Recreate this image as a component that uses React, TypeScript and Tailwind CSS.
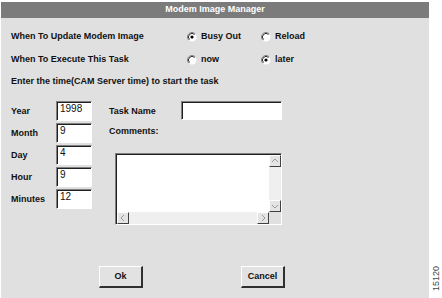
import React from "react";

const font = { fontFamily: '"Liberation Sans", Arial, sans-serif' };

function Radio({ checked }: { checked?: boolean }) {
  return (
    <svg width="10" height="10" viewBox="0 0 10 10" className="shrink-0">
      <circle cx="5" cy="5" r="4.5" fill="#ffffff" />
      <path d="M1.8 8.2 A4.5 4.5 0 0 1 8.2 1.8" stroke="#808080" strokeWidth="1" fill="none" />
      <path d="M2.5 7.5 A3.5 3.5 0 0 1 7.5 2.5" stroke="#303030" strokeWidth="1" fill="none" />
      {checked && <circle cx="5" cy="5" r="1.6" fill="#000" />}
    </svg>
  );
}

function RadioItem({ label, checked, w }: { label: string; checked?: boolean; w: string }) {
  return (
    <div className={`flex items-center gap-[4px] ${w}`}>
      <Radio checked={checked} />
      <span>{label}</span>
    </div>
  );
}

function Field({ value, cls }: { value?: string; cls: string }) {
  return (
    <div
      className={`bg-white border-t border-l border-t-[#808080] border-l-[#808080] border-b border-r border-b-white border-r-white shadow-[inset_1px_1px_0_#202020] pl-[3px] pt-[1px] font-normal text-[10px] leading-[12px] text-[#111] ${cls}`}
    >
      {value}
    </div>
  );
}

function ScrollBtn({ dir }: { dir: "up" | "down" | "left" | "right" }) {
  const pts: Record<string, string> = {
    up: "3,7 6,4 9,7",
    down: "3,5 6,8 9,5",
    left: "7,3 4,6 7,9",
    right: "5,3 8,6 5,9",
  };
  return (
    <div className="w-[12px] h-[12px] bg-[#e4e4e4] border-t border-l border-t-white border-l-white border-b border-r border-b-[#404040] border-r-[#404040] flex items-center justify-center">
      <svg width="10" height="10" viewBox="1 1 10 10">
        <polyline points={pts[dir]} fill="none" stroke="#9a9a9a" strokeWidth="1" />
      </svg>
    </div>
  );
}

function Button({ label }: { label: string }) {
  return (
    <div className="w-[44px] h-[22px] bg-[#e2e2e2] border-t border-l border-t-white border-l-white border-b-2 border-r-2 border-b-[#303030] border-r-[#303030] flex items-center justify-center text-[9px] font-bold text-[#111]">
      {label}
    </div>
  );
}

export default function App() {
  return (
    <div className="w-[442px] h-[298px] bg-white flex overflow-hidden text-[#111] font-bold text-[9px]" style={font}>
      <div className="w-[428px] ml-[1px] mt-[2px] bg-[#e0e0e0] flex flex-col">
        <div className="h-[16px] bg-[#7b7b7b] flex items-center justify-center text-white text-[9px] font-bold">
          Modem Image Manager
        </div>
        <div className="pl-[10px] flex flex-col">
          <div className="mt-[12px] h-[14px] flex items-center">
            <div className="w-[176px]">When To Update Modem Image</div>
            <RadioItem label="Busy Out" checked w="w-[74px]" />
            <RadioItem label="Reload" w="w-[60px]" />
          </div>
          <div className="mt-[9px] h-[14px] flex items-center">
            <div className="w-[176px]">When To Execute This Task</div>
            <RadioItem label="now" w="w-[74px]" />
            <RadioItem label="later" checked w="w-[60px]" />
          </div>
          <div className="mt-[8px] h-[14px] flex items-center">
            Enter the time(CAM Server time) to start the task
          </div>
          <div className="mt-[12px] flex">
            <div className="flex flex-col gap-[2px] w-[81px]">
              {[
                ["Year", "1998"],
                ["Month", "9"],
                ["Day", "4"],
                ["Hour", "9"],
                ["Minutes", "12"],
              ].map(([l, v]) => (
                <div key={l} className="flex items-center h-[20px]">
                  <div className="w-[45px] pt-[1px]">{l}</div>
                  <Field value={v} cls="w-[36px] h-[20px]" />
                </div>
              ))}
            </div>
            <div className="ml-[17px] flex flex-col">
              <div className="flex items-center h-[19px]">
                <div className="w-[72px] pt-[2px]">Task Name</div>
                <Field cls="w-[101px] h-[19px]" />
              </div>
              <div className="mt-[5px] h-[14px] flex items-center">Comments:</div>
              <div className="mt-[14px] ml-[6px] w-[167px] h-[72px] bg-white border-t border-l border-t-[#808080] border-l-[#808080] border-b border-r border-b-white border-r-white shadow-[inset_1px_1px_0_#202020] pl-[1px] pt-[1px] flex flex-col">
                <div className="flex flex-1">
                  <div className="flex-1" />
                  <div className="w-[12px] bg-[#efefef] flex flex-col justify-between">
                    <ScrollBtn dir="up" />
                    <ScrollBtn dir="down" />
                  </div>
                </div>
                <div className="flex h-[12px]">
                  <div className="flex-1 bg-[#efefef] flex justify-between">
                    <ScrollBtn dir="left" />
                    <ScrollBtn dir="right" />
                  </div>
                  <div className="w-[12px] bg-[#e0e0e0]" />
                </div>
              </div>
            </div>
          </div>
          <div className="mt-[41px] flex">
            <div className="ml-[88px]">
              <Button label="Ok" />
            </div>
            <div className="ml-[98px]">
              <Button label="Cancel" />
            </div>
          </div>
        </div>
      </div>
      <div className="flex-1 flex flex-col justify-end items-center pb-[7px]">
        <div className="[writing-mode:vertical-rl] rotate-180 text-[9px] font-normal text-[#444] leading-[10px]">
          15120
        </div>
      </div>
    </div>
  );
}
